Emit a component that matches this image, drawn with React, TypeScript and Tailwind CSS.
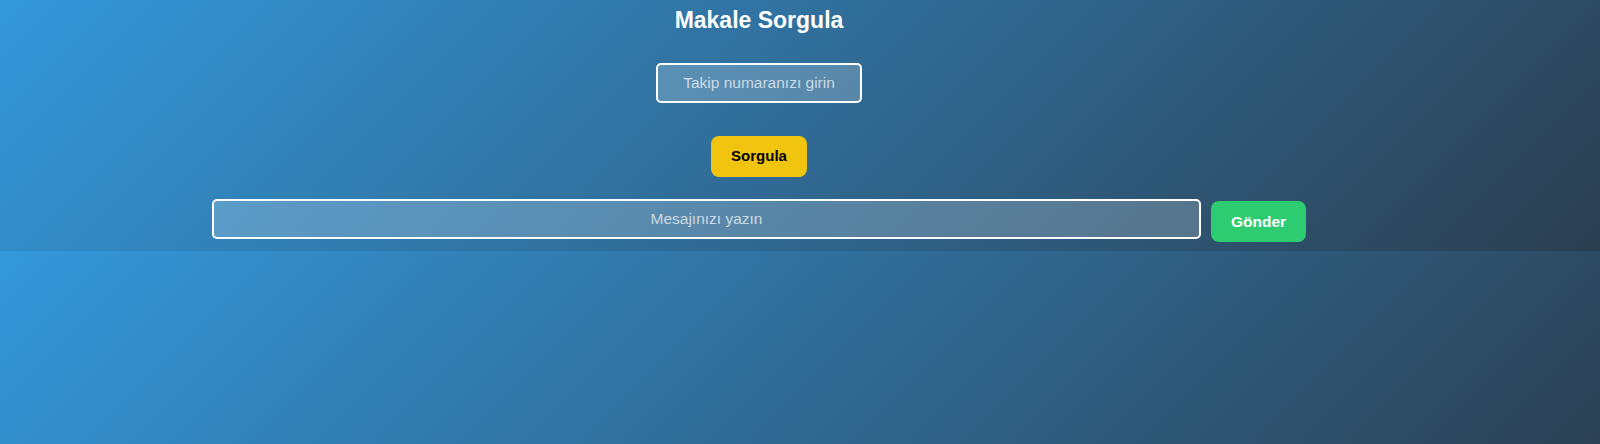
import React, { useState } from 'react';

export default function App() {
  const [takip, setTakip] = useState('');
  const [mesaj, setMesaj] = useState('');

  return (
    <div className="min-h-screen bg-[linear-gradient(135deg,#3498db,#2c3e50)] bg-[length:100%_251px] bg-repeat-y font-['Liberation_Sans',Arial,sans-serif]">
      {/* Sorgu paneli */}
      <div className="w-[1518px] flex flex-col items-center pt-[6px] pb-[9px] text-white">
        <h2 className="text-[23px] leading-[28px] font-bold">Makale Sorgula</h2>

        <input
          type="text"
          value={takip}
          onChange={(e) => setTakip(e.target.value)}
          placeholder="Takip numaranızı girin"
          className="mt-[29px] w-[206px] h-[40px] rounded-[5px] border-2 border-white bg-white/20 text-center font-['Liberation_Sans',Arial,sans-serif] text-[15.5px] text-white placeholder:text-white/70 outline-none"
        />

        <button className="mt-[33px] h-[41px] px-[20px] rounded-[8px] bg-[#f1c40f] text-black font-['Liberation_Sans',Arial,sans-serif] text-[15px] font-bold">
          Sorgula
        </button>

        <div className="mt-[22px] flex items-start gap-[10px]">
          <input
            type="text"
            value={mesaj}
            onChange={(e) => setMesaj(e.target.value)}
            placeholder="Mesajınızı yazın"
            className="w-[989px] h-[40px] rounded-[5px] border-2 border-white bg-white/20 text-center font-['Liberation_Sans',Arial,sans-serif] text-[15.5px] text-white placeholder:text-white/70 outline-none"
          />
          <button className="mt-[2px] h-[41px] w-[95px] rounded-[8px] bg-[#2ecc71] text-white font-['Liberation_Sans',Arial,sans-serif] text-[15.5px] font-bold">
            Gönder
          </button>
        </div>
      </div>
    </div>
  );
}
